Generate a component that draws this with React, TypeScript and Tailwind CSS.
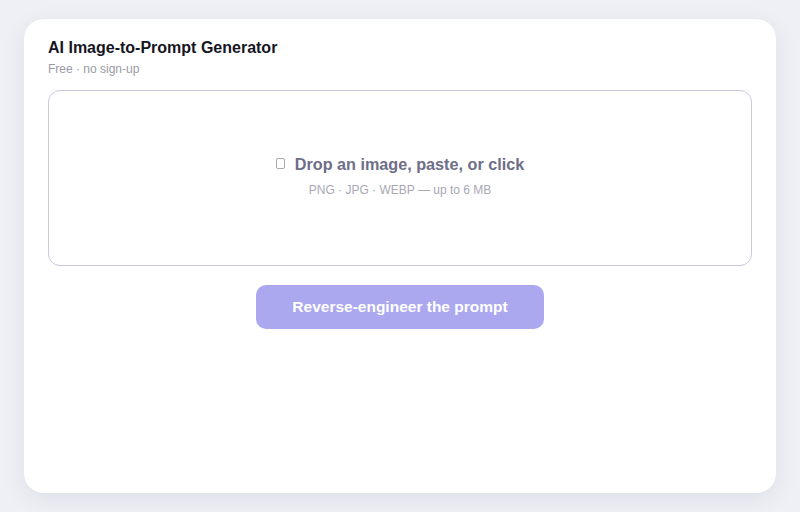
export default function App() {
  return (
    <div
      className="min-h-screen w-full bg-[#eef0f5] px-6 pt-[19px] pb-[19px]"
      style={{ fontFamily: "'Liberation Sans', Arial, sans-serif" }}
    >
      {/* Card */}
      <div className="h-[474px] rounded-[20px] bg-white px-6 pt-[20px] shadow-[0_6px_24px_rgba(30,35,70,0.08)]">
        <h1 className="text-[16px] font-bold leading-[18px] text-[#15151f]">AI Image-to-Prompt Generator</h1>
        <p className="mt-[5px] text-[12px] leading-[14px] text-[#9a9aa6]">Free · no sign-up</p>

        {/* Drop zone */}
        <div className="mt-[14px] flex h-[176px] flex-col items-center justify-center rounded-[12px] border border-[#cbc8e2] bg-white pb-[6px]">
          <div className="flex items-center gap-[10px]">
            <span className="inline-block h-[11px] w-[9px] rounded-[2px] border border-[#a8a8b8]" />
            <span className="text-[16.2px] font-bold leading-[20px] text-[#6e6e88]">Drop an image, paste, or click</span>
          </div>
          <p className="mt-[9px] text-[12px] leading-[14px] text-[#a8a8b4]">PNG · JPG · WEBP — up to 6 MB</p>
        </div>

        {/* Action */}
        <div className="mt-[19px] flex justify-center">
          <button className="h-[44px] w-[288px] rounded-[10px] bg-[#aba8ef] text-[15.5px] font-bold text-white">
            Reverse-engineer the prompt
          </button>
        </div>
      </div>
    </div>
  );
}
